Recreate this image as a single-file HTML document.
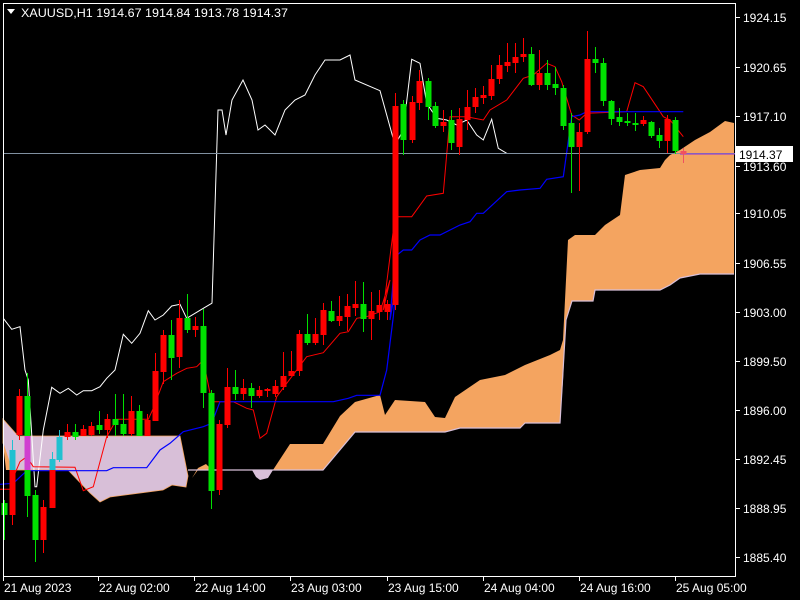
<!DOCTYPE html>
<html><head><meta charset="utf-8"><style>
html,body{margin:0;padding:0;background:#000;width:800px;height:600px;overflow:hidden}
svg{display:block}
text{font-family:"Liberation Sans",sans-serif;font-size:12px;fill:#fff}
</style></head><body>
<svg id="c" width="800" height="600" xmlns="http://www.w3.org/2000/svg">
<rect width="800" height="600" fill="#000"/>
<g id="cloud"></g>
<g id="lines"></g>
<g id="candles"></g>
<g id="axis"></g>
</svg>
<script>
var NS="http://www.w3.org/2000/svg";
function el(p,t,a){var e=document.createElementNS(NS,t);for(var k in a)e.setAttribute(k,a[k]);p.appendChild(e);return e;}
var cl=document.getElementById('cloud'),ln=document.getElementById('lines'),cd=document.getElementById('candles'),ax=document.getElementById('axis');
el(cl,'polygon',{fill:'#d8bfd8',stroke:'#f4a460','stroke-width':0.8,points:"3,419 18,436 180,436 188,476 186,487 172,485 163,490 125,495 110,497 100,502 90,493 68,470 12,470 3,443"});
el(cl,'polygon',{fill:'#d8bfd8',points:"252,470 273,470 268,478 260,480 256,477"});
el(cl,'polygon',{fill:'#f4a460',points:"3,443 12,470 6,470"});
el(cl,'polygon',{fill:'#f4a460',points:"192,478 198,468 206,464 212,470 198,470"});
el(cl,'polygon',{fill:'#f4a460',points:"273,470 290,444 323,444 340,416 355,402 380,395 385,415 395,400 425,402 435,417 445,418 455,397 480,380 505,375 525,365 550,355 560,350 563,340 568,240 575,235 595,235 605,225 620,215 625,175 640,170 660,168 665,160 670,155 680,150 695,140 710,132 725,121 734,123 734,274 700,274 680,278 670,285 660,290 595,290 593,301 572,301 566,320 563,380 560,423 525,423 520,428 460,428 445,432 355,432 323,470"});
el(cl,'polyline',{fill:'none',stroke:'#d8bfd8','stroke-width':1.2,points:"188,470 323,470 355,432 445,432 460,428 520,428 525,423 560,423 566,320 572,301 593,301 595,290 660,290 670,285 680,278 700,274 734,274"});
var w1=[[10,115],[35,148],[60,140],[75,270],[85,300],[105,620],[110,620],[130,450],[155,322],[180,340],[205,325],[230,345],[250,332],[275,332],[300,320],[320,295],[345,270],[370,163],[395,190],[420,160],[445,92],[465,120],[490,105],[515,78],[540,73],[560,115],[585,100],[610,85],[635,70]].map(function(p){return [p[0]/3,280+p[1]/3]});
var w2=[[212,303],[218,110],[222,110],[226,135],[232,100],[243,80],[252,100],[258,130],[265,125],[275,135],[285,110],[295,100],[305,95],[315,75],[325,60],[340,60],[350,55],[355,80]];
var w3=[[0,212],[45,375],[70,330],[95,118],[120,130],[140,250],[170,295],[200,300],[230,315],[260,300],[290,345],[310,360],[335,298],[355,385],[380,400]].map(function(p){return [380+p[0]/3,20+p[1]/3]});
var wall=w1.concat(w2,w3);
function pts(a){return a.map(function(p){return p[0].toFixed(1)+','+p[1].toFixed(1)}).join(' ')}
var r1=[[0,628],[30,628],[45,580],[60,545],[80,530],[100,560],[225,562],[250,632],[280,620],[320,470],[350,418],[445,418],[460,385],[490,305],[530,280],[560,265],[590,260],[610,240],[635,365],[700,365],[740,385],[760,390],[780,475],[800,460],[830,350],[920,230],[970,218],[1020,160],[1045,155],[1070,115],[1100,110],[1140,95],[1170,0]].map(function(p){return [p[0]/3,280+p[1]/3]});
var r2=[[10,870],[45,590],[95,590],[140,528],[190,520],[210,290],[260,290],[310,300],[330,270],[380,240],[430,175],[460,165],[500,130],[525,140],[545,185],[575,285],[598,300],[620,280],[740,275],[765,188],[790,200],[810,230],[850,290],[870,300],[910,350]].map(function(p){return [380+p[0]/3,20+p[1]/3]});
var b1=[[0,613],[40,610],[80,572],[320,572],[340,563],[440,563],[480,510],[510,490],[550,455],[610,440],[635,430],[660,365],[1000,365],[1045,355],[1070,346],[1140,346],[1160,270],[1180,110],[1190,0]].map(function(p){return [p[0]/3,280+p[1]/3]});
var b2=[[30,900],[45,710],[70,690],[95,690],[120,660],[150,645],[180,645],[240,615],[270,605],[290,580],[310,580],[380,515],[420,510],[480,505],[500,478],[550,470],[575,290],[600,285],[620,275],[910,275]].map(function(p){return [380+p[0]/3,20+p[1]/3]});
el(ln,'polyline',{fill:'none',stroke:'#fff','stroke-width':1,points:pts(wall)});
el(ln,'polyline',{fill:'none',stroke:'#f00','stroke-width':1,points:pts(r1.concat(r2))});
el(ln,'polyline',{fill:'none',stroke:'#00f','stroke-width':1.2,points:pts(b1.concat(b2))});
el(ln,'line',{x1:3,y1:153.5,x2:735,y2:153.5,stroke:'#8090a0','stroke-width':1});
el(ln,'line',{x1:680,y1:154,x2:735,y2:154,stroke:'#8a2be2','stroke-width':1});
var G='#00e000',R='#f00',C='#20c0d0',M='#d040d0';
var K=[[4,503,515,G,500,540],[12,450,470,C,440,480],[12,470,515,R,470,525],[19,396,435,R,389,440],[27,396,436,G,373,436],[27,436,470,M,436,470],[27,470,496,G,470,517],[35,495,540,G,490,562],[43,507,540,R,500,553],[52,459,470,C,452,470],[52,470,508,R,470,508],[59,437,460,C,430,462],[67,432,437,R,424,440],[75,432,437,G,424,440],[83,429,436,R,425,436],[91,426,435,R,422,436],[99,425,430,G,411,434],[107,419,430,R,414,438],[115,419,425,G,394,436],[123,424,434,G,394,436],[131,411,434,R,396,436],[139,411,436,G,405,436],[147,420,436,R,414,436],[155,371,421,R,353,421],[163,335,372,R,330,384],[171,335,358,G,320,380],[179,318,357,R,300,368],[187,318,330,G,294,333],[195,326,330,R,317,337],[203,326,393,G,309,408],[211,393,491,G,390,509],[219,424,490,R,420,495],[227,387,425,R,368,428],[235,387,394,G,370,400],[243,388,394,R,379,400],[251,388,396,G,383,408],[259,390,396,R,386,398],[267,389,391,R,388,397],[275,386,394,R,380,397],[283,376,387,R,352,390],[291,371,376,R,351,376],[299,334,371,R,330,376],[307,334,343,G,314,345],[315,334,343,R,318,345],[323,310,335,R,303,345],[331,311,321,G,301,322],[339,316,321,R,296,326],[347,306,317,R,294,331],[355,304,308,R,281,316],[363,304,319,G,282,332],[371,311,319,R,292,340],[379,305,312,R,290,320],[387,304,312,R,300,320],[395,106,305,R,93,310],[403,104,140,G,100,155],[412,102,140,R,96,143],[419,81,103,R,70,110],[428,81,107,G,78,120],[435,106,126,G,102,128],[443,122,126,R,110,132],[451,120,143,G,110,150],[459,119,147,R,108,155],[467,107,120,R,90,130],[475,97,107,R,88,113],[483,95,98,R,86,104],[491,79,96,R,65,100],[499,65,79,R,55,84],[507,62,66,R,43,72],[515,57,63,R,43,73],[523,54,57,R,38,62],[531,54,85,G,47,86],[539,73,85,R,50,90],[547,73,85,G,60,90],[555,84,88,G,67,95],[563,88,126,G,85,130],[571,123,147,G,113,193],[579,132,147,R,123,191],[587,59,132,R,31,134],[595,59,63,G,47,73],[603,63,101,G,58,106],[611,101,119,G,100,125],[619,117,122,G,108,126],[627,121,123,G,113,126],[635,123,125,G,113,131],[643,120,124,R,116,126],[651,122,136,G,121,138],[659,135,141,G,128,148],[667,119,141,R,115,153],[675,120,151,G,117,154],[683,151,154,'#f05060',148,163]];
K.forEach(function(k){
 el(cd,'line',{x1:k[0]+0.5,y1:k[4],x2:k[0]+0.5,y2:k[5],stroke:k[3],'stroke-width':1});
 el(cd,'rect',{x:k[0]-2.5,y:k[1],width:6,height:Math.max(1,k[2]-k[1]),fill:k[3]});
});
el(ax,'rect',{x:3.5,y:3.5,width:732,height:573,fill:'none',stroke:'#fff','stroke-width':1});
var L=[["1924.15",17],["1920.65",67],["1917.10",116],["1913.60",166],["1910.05",213],["1906.55",263],["1903.00",312],["1899.50",361],["1896.00",410],["1892.45",459],["1888.95",508],["1885.40",557]];
L.forEach(function(l){el(ax,'line',{x1:736,y1:l[1]+0.5,x2:740,y2:l[1]+0.5,stroke:'#fff'});var t=el(ax,'text',{x:743,y:l[1]+5});t.textContent=l[0];});
el(ax,'rect',{x:736,y:146,width:57,height:16,fill:'#fff'});
var t=el(ax,'text',{x:739,y:159,style:'fill:#000'});t.textContent="1914.37";
var D=[["21 Aug 2023",3],["22 Aug 02:00",98],["22 Aug 14:00",194],["23 Aug 03:00",290],["23 Aug 15:00",387],["24 Aug 04:00",483],["24 Aug 16:00",579],["25 Aug 05:00",675]];
D.forEach(function(d){el(ax,'line',{x1:d[1]+0.5,y1:577,x2:d[1]+0.5,y2:581,stroke:'#fff'});var t=el(ax,'text',{x:d[1]+1,y:592});t.textContent=d[0];});
el(ax,'polygon',{points:"7,9 15,9 11,14",fill:'#fff'});
var tt=el(ax,'text',{x:21,y:17,textLength:267,lengthAdjust:'spacingAndGlyphs'});tt.textContent="XAUUSD,H1  1914.67 1914.84 1913.78 1914.37";
</script>
</body></html>
